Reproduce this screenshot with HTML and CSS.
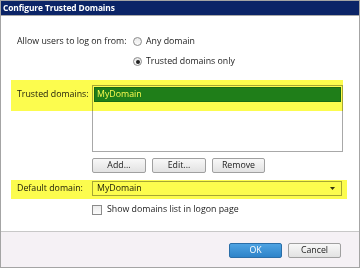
FILE: index.html
```html
<!DOCTYPE html>
<html>
<head>
<meta charset="utf-8">
<link rel="stylesheet" href="styles.css">
</head>
<body>
<div class="dialog">
  <div class="titlebar">Configure Trusted Domains</div>
  <div class="content">
    <div class="allow-row">
      <span class="label allow-label">Allow users to log on from:</span>
      <div class="radios">
        <div class="radio"><span class="dot"></span><span>Any domain</span></div>
        <div class="radio checked"><span class="dot"></span><span>Trusted domains only</span></div>
      </div>
    </div>
    <div class="field-row trusted-row">
      <span class="label top-label">Trusted domains:</span>
      <div class="listbox"><div class="item selected">MyDomain</div></div>
    </div>
    <div class="buttons-row">
      <span class="btn">Add...</span>
      <span class="btn">Edit...</span>
      <span class="btn">Remove</span>
    </div>
    <div class="field-row default-row">
      <span class="label">Default domain:</span>
      <div class="combo">
        <span>MyDomain</span>
        <svg class="arrow" width="5" height="3" viewBox="0 0 5 3"><path d="M0 0h5L2.5 3z" fill="#333"/></svg>
      </div>
    </div>
    <div class="check-row"><span class="box"></span><span>Show domains list in logon page</span></div>
    <div class="hl hl-trusted"></div>
    <div class="hl hl-default"></div>
  </div>
  <div class="footer">
    <span class="btn primary">OK</span>
    <span class="btn">Cancel</span>
  </div>
</div>
</body>
</html>
```
FILE: styles.css
```css
* { box-sizing: border-box; }
html, body { margin: 0; padding: 0; background: #fff; }
body {
  font-family: "Open Sans", "DejaVu Sans", sans-serif;
  font-size: 8.8px;
  color: #222;
}
.dialog {
  width: 360px;
  height: 268px;
  border: 1px solid #a4a4a4;
  display: flex;
  flex-direction: column;
  background: #fff;
}
.titlebar {
  height: 15px;
  background: #0b2467;
  border-bottom: 1px solid #a8a8a8;
  color: #fff;
  font-weight: bold;
  font-size: 8.4px;
  letter-spacing: -0.1px;
  line-height: 13px;
  padding-left: 2px;
  white-space: nowrap;
}
.content {
  position: relative;
  height: 215px;
  padding: 19px 16px 0 16px;
}
.label { line-height: 13px; white-space: nowrap; }
.allow-row { display: flex; }
.allow-label { width: 116px; flex: none; }
.radios { display: flex; flex-direction: column; gap: 7px; }
.radio { display: flex; align-items: center; gap: 4px; line-height: 13px; height: 13px; }
.dot {
  width: 9px; height: 9px; border-radius: 50%;
  border: 1px solid #8b8b8b;
  background: linear-gradient(#e9e9e9, #fbfbfb);
  display: flex; align-items: center; justify-content: center;
}
.radio.checked .dot::after {
  content: ""; width: 4px; height: 4px; border-radius: 50%; background: #222;
}
.field-row { display: flex; }
.field-row .label { width: 75px; flex: none; }
.trusted-row { margin-top: 17px; }
.top-label { margin-top: 3px; }
.listbox {
  width: 251px; height: 67px;
  border: 1px solid #a8a8a8;
  padding: 1px;
  background: #fff;
}
.item {
  height: 15px; line-height: 13px;
  padding-left: 2px;
}
.item.selected {
  background: #1f7f50;
  border: 1px solid #186a44;
  color: #fff;
}
.buttons-row {
  display: flex; gap: 6px;
  margin-top: 6px;
  padding-left: 75px;
}
.btn {
  width: 54px; height: 15px;
  border: 1px solid #a0a0a0;
  border-radius: 2px;
  background: linear-gradient(#f8f8f8, #e2e2e2);
  display: flex; align-items: center; justify-content: center;
  line-height: 13px;
  color: #222;
}
.buttons-row .btn:last-child { width: 53px; }
.default-row { margin-top: 8px; align-items: center; }
.combo {
  width: 250px; height: 15px;
  border: 1px solid #a8a8a8;
  background: #fff;
  display: flex; align-items: center; justify-content: space-between;
  padding: 0 6px 0 4px;
  line-height: 13px;
}
.check-row {
  display: flex; align-items: center; gap: 5px;
  margin-top: 7px;
  padding-left: 75px;
  line-height: 13px;
}
.box {
  width: 10px; height: 10px;
  border: 1px solid #8b8b8b;
  background: linear-gradient(#ececec, #fbfbfb);
}
.hl {
  position: absolute;
  background: #fcfc4e;
  mix-blend-mode: multiply;
  pointer-events: none;
}
.hl-trusted { left: 10px; top: 64px; width: 332px; height: 31px; }
.hl-default { left: 10px; top: 164px; width: 336px; height: 19px; }
.footer {
  flex: 1;
  border-top: 1px solid #c8c8c8;
  background: #f5f1f5;
  display: flex; justify-content: flex-end; gap: 6px;
  padding: 11px 18px 0 0;
}
.footer .btn { width: 53px; }
.btn.primary {
  background: linear-gradient(#4ea3e2, #2d83c9);
  border-color: #2a6ea8;
  color: #fff;
}
```
